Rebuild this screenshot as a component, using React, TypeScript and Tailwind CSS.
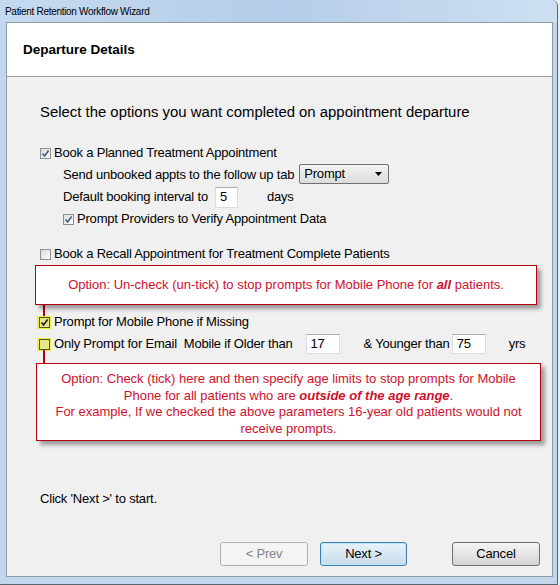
import React from 'react';

const FONT = { fontFamily: '"Liberation Sans", Arial, sans-serif' };

interface CheckProps {
    checked?: boolean;
    highlight?: boolean;
}

// Win7 style small checkbox, optionally with the yellow callout highlight
const Check: React.FC<CheckProps> = ({ checked, highlight }) => {
    const mark = (
        <svg width="9" height="9" viewBox="0 0 9 9" className="block">
            <path d="M1.5 4.5 L3.6 7 L7.6 1.6" fill="none" stroke={highlight ? '#1a1a1a' : '#4b5c86'} strokeWidth="1.6" />
        </svg>
    );
    if (highlight) {
        return (
            <div className="-ml-[3px] w-[14px] h-[13px] bg-[#eef03c] flex items-center justify-center shrink-0">
                <div className="w-[11px] h-[11px] border border-[#55552a] bg-[#e4e68a] flex items-center justify-center">
                    {checked && mark}
                </div>
            </div>
        );
    }
    return (
        <div className="w-[11px] h-[11px] border border-[#8f8f8f] bg-gradient-to-br from-[#dcdcdc] to-[#fbfbfb] flex items-center justify-center shrink-0">
            {checked && mark}
        </div>
    );
};

const Field: React.FC<{ value: string; className?: string }> = ({ value, className }) => (
    <div className={`h-[20px] bg-white border border-[#dadce2] border-t-[#abadb3] flex items-center pl-[4px] ${className ?? ''}`}>
        {value}
    </div>
);

export default function App() {
    return (
        <div className="w-[560px] h-[585px] bg-[#e9eef3]" style={FONT}>
            <div className="relative w-[558px] h-[585px] bg-[#c2d7ed] border-r border-b border-[#5a6470] rounded-tr-[6px] text-[13px] tracking-[-0.2px] text-black">
                {/* Title bar */}
                <div className="h-[22px] pl-[5px] flex items-center text-[10px] tracking-[-0.3px] bg-gradient-to-r from-[#c4daf0] via-[#b5cde8] to-[#cde0f3] rounded-tr-[6px]">
                    Patient Retention Workflow Wizard
                </div>

                {/* Client area */}
                <div className="ml-[6px] w-[547px] border border-[#8e9aa6] bg-[#f0f0f0]">
                    <div className="h-[54px] bg-white border-b border-[#a0a0a0] flex items-center pl-[16px] pt-[2px] text-[13.5px] font-bold tracking-normal">
                        Departure Details
                    </div>

                    <div className="h-[499px] pl-[33px] pr-[12px] flex flex-col">
                        <div className="mt-[24px] h-[22px] flex items-center text-[14.9px] tracking-normal">
                            Select the options you want completed on appointment departure
                        </div>

                        <div className="mt-[19px] h-[22px] flex items-center gap-[3px]">
                            <Check checked />
                            <span>Book a Planned Treatment Appointment</span>
                        </div>
                        <div className="h-[22px] pl-[23px] flex items-center">
                            <span>Send unbooked appts to the follow up tab</span>
                            <div className="ml-[5px] -mt-[2px] w-[90px] h-[20px] rounded-[2px] border border-[#707070] bg-gradient-to-b from-[#f3f3f3] to-[#dcdcdc] flex items-center justify-between pl-[4px] pr-[6px]">
                                <span>Prompt</span>
                                <svg width="7" height="4" viewBox="0 0 7 4"><path d="M0 0 H7 L3.5 4 Z" fill="#000" /></svg>
                            </div>
                        </div>
                        <div className="h-[22px] pl-[23px] flex items-center">
                            <span>Default booking interval to</span>
                            <Field value="5" className="ml-[7px] w-[23px] h-[21px]" />
                            <span className="ml-[29px]">days</span>
                        </div>
                        <div className="h-[22px] pl-[23px] flex items-center gap-[3px]">
                            <Check checked />
                            <span>Prompt Providers to Verify Appointment Data</span>
                        </div>

                        <div className="mt-[13px] h-[22px] flex items-center gap-[3px]">
                            <Check />
                            <span>Book a Recall Appointment for Treatment Complete Patients</span>
                        </div>

                        {/* row hidden behind the first callout */}
                        <div className="mt-[12px] h-[22px]" />

                        <div className="mt-[12px] h-[22px] flex items-center gap-[3px]">
                            <Check checked highlight />
                            <span>Prompt for Mobile Phone if Missing</span>
                        </div>
                        <div className="h-[22px] flex items-center gap-[3px]">
                            <Check highlight />
                            <span className="whitespace-pre">Only Prompt for Email  Mobile if Older than</span>
                            <Field value="17" className="ml-[10px] w-[34px]" />
                            <span className="ml-[21px]">&amp; Younger than</span>
                            <Field value="75" className="-ml-[1px] w-[34px]" />
                            <span className="ml-[20px]">yrs</span>
                        </div>

                        <div className="mt-[133px] h-[22px] flex items-center">Click 'Next &gt;' to start.</div>

                        <div className="mt-[32px] flex items-center justify-end">
                            <button className="w-[88px] h-[24px] rounded-[3px] border border-[#adb2b5] bg-[#f4f4f4] text-[#838383]">
                                &lt; Prev
                            </button>
                            <button className="ml-[12px] w-[87px] h-[24px] rounded-[3px] border border-[#3c7fb1] bg-gradient-to-b from-[#e8f3fb] to-[#c7dceb] shadow-[inset_0_0_0_1px_#bfe4fa]">
                                Next &gt;
                            </button>
                            <button className="ml-[45px] w-[88px] h-[24px] rounded-[3px] border border-[#707070] bg-gradient-to-b from-[#f4f4f4] via-[#e6e6e6] to-[#d2d2d2]">
                                Cancel
                            </button>
                        </div>
                    </div>
                </div>

                {/* Annotation callouts laid over the dialog */}
                <div className="absolute left-[43px] top-[305px] w-[1.5px] h-[11px] bg-[#b4000f]" />
                <div className="absolute left-[43px] top-[350px] w-[1.5px] h-[13px] bg-[#b4000f]" />

                <div className="absolute left-[35px] top-[265px] w-[502px] h-[40px] bg-white border-[1.5px] border-[#b4000f] shadow-[4px_4px_4px_rgba(0,0,0,0.35)] flex items-center justify-center text-[#d0102c] tracking-normal">
                    <span>
                        Option: Un-check (un-tick) to stop prompts for Mobile Phone for <b><i>all</i></b> patients.
                    </span>
                </div>

                <div className="absolute left-[36px] top-[363px] w-[505px] h-[78px] bg-white border-[1.5px] border-[#b4000f] shadow-[4px_4px_4px_rgba(0,0,0,0.35)] pt-[7px] text-center leading-[16.7px] text-[#d0102c] tracking-normal">
                    Option: Check (tick) here and then specify age limits to stop prompts for Mobile
                    <br />
                    Phone for all patients who are <b><i>outside of the age range</i></b>.
                    <br />
                    For example, If we checked the above parameters 16-year old patients would not
                    <br />
                    receive prompts.
                </div>
            </div>
        </div>
    );
}
